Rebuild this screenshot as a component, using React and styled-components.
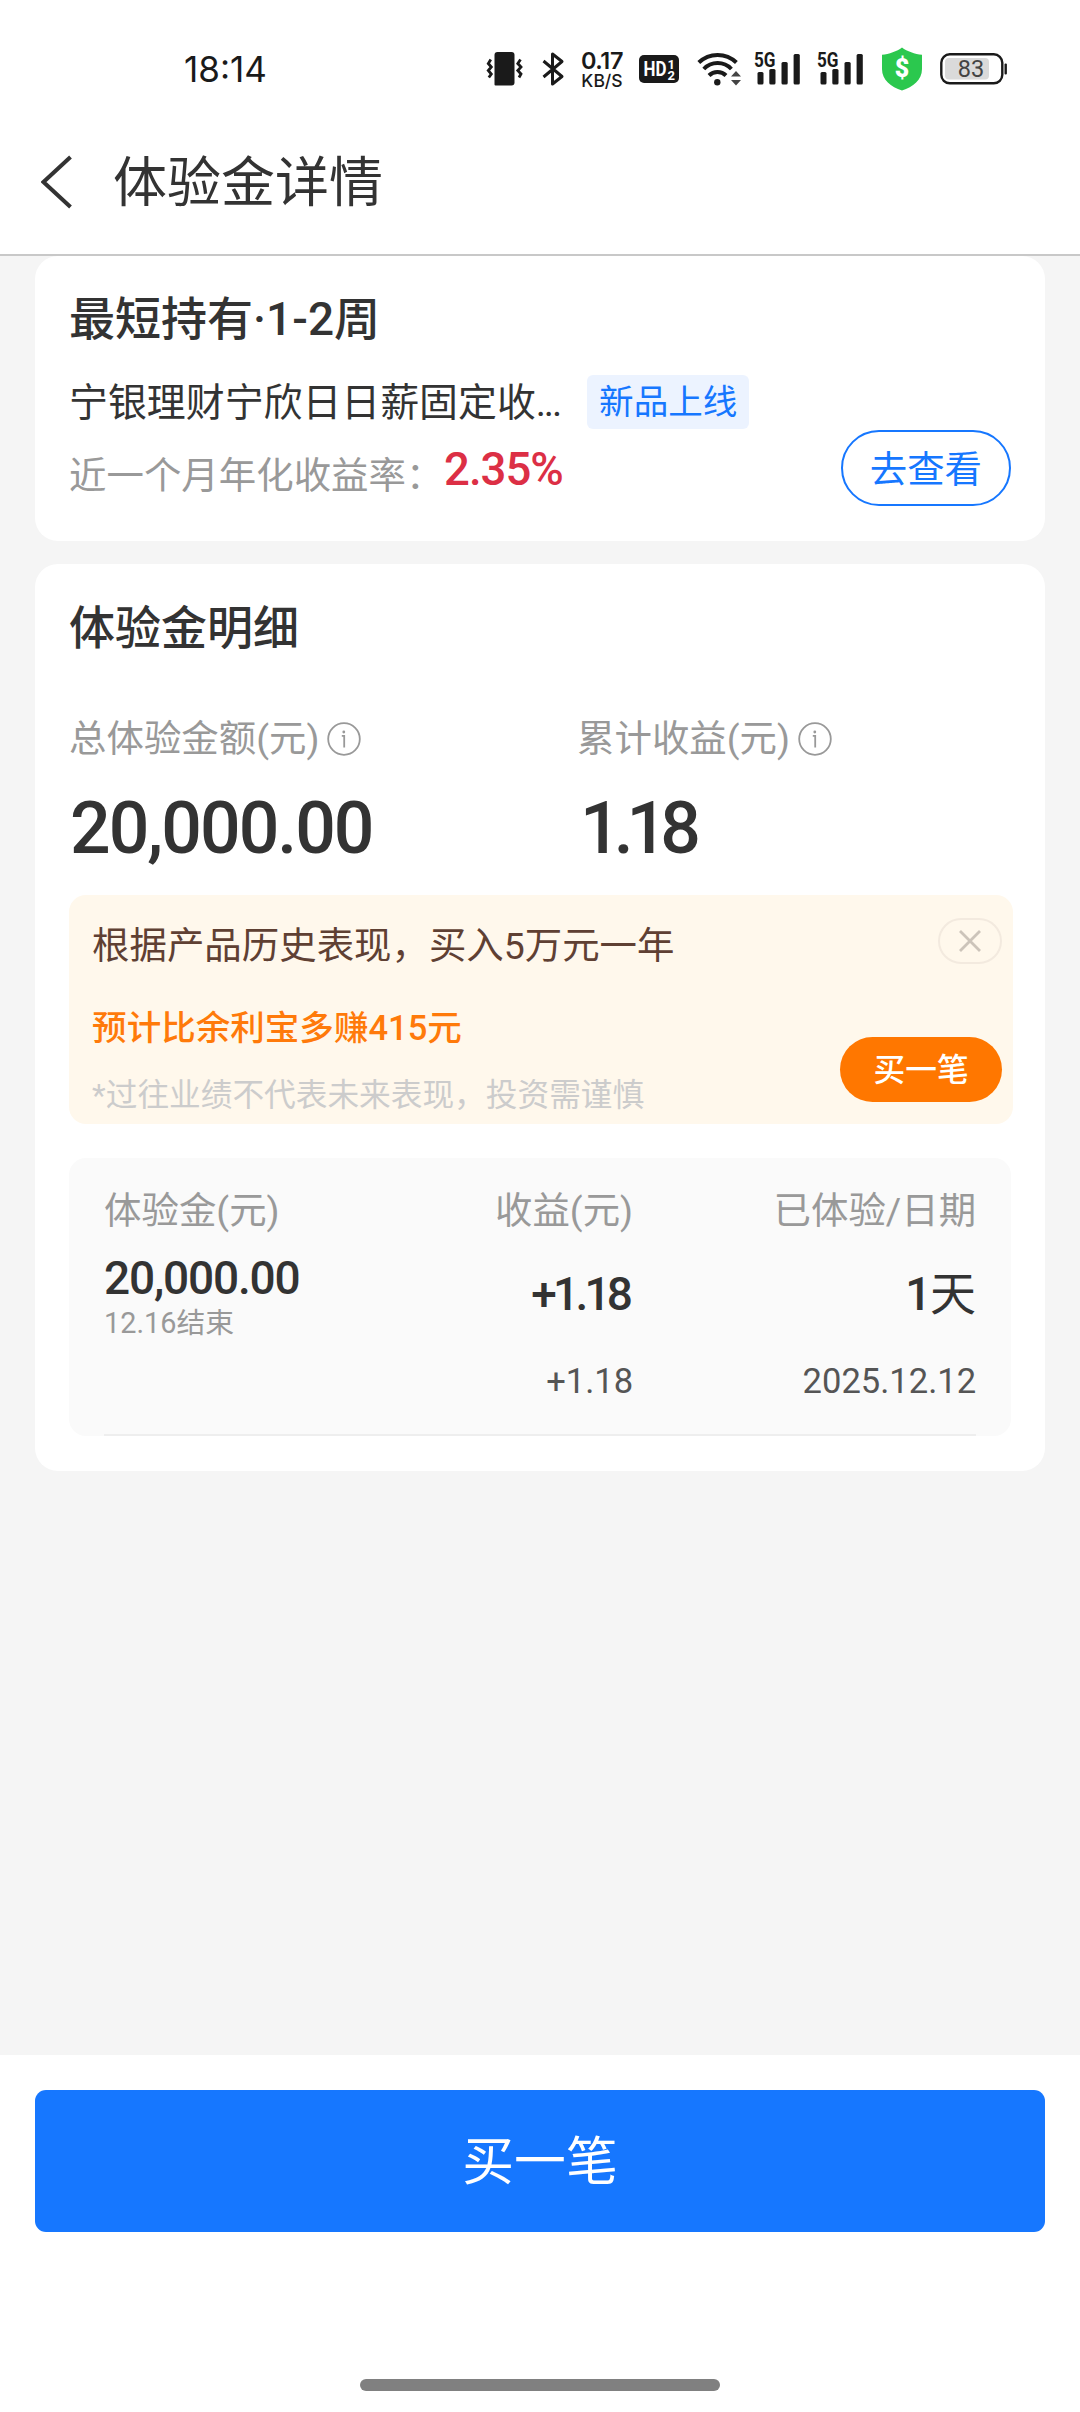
import React from "react";
import styled, { createGlobalStyle } from "styled-components";

const SignalIcon = () => (
	<svg width="48" height="44" viewBox="-1 -5 48 44" fill="#1a1a1a">
		<text x="0" y="15" fontSize="20" fontWeight="700" fontFamily="Roboto, sans-serif" textLength="21.5" lengthAdjust="spacingAndGlyphs">5G</text>
		<rect x="3.5" y="20" width="6" height="12.5" rx="1.5" />
		<rect x="15.3" y="17" width="6.2" height="15.5" rx="1.5" />
		<rect x="27.5" y="10" width="6.2" height="22.5" rx="1.5" />
		<rect x="39.6" y="2" width="6.2" height="30.5" rx="1.5" />
	</svg>
)

const InfoIcon = () => (
	<svg width="34" height="34" viewBox="0 0 34 34" fill="none" stroke="#999" strokeWidth="1.8">
		<circle cx="17" cy="17" r="15.8" />
		<path d="M14.8 13.9h2.4v11.500" />
		<circle cx="16.8" cy="10" r="1.4" fill="#999" stroke="none" />
	</svg>
)

const StatusIcons = () => (
	<>
		<StatusItem $left={220}>
			<svg width="38" height="36" viewBox="0 0 38 36">
				<path d="M8.500 4q0-3 3-3h14q3 0 3 3v27.500q0 3-3 3h-16q-1 0-1-1z" fill="#1a1a1a" />
				<path d="M4.800 8.500L2.300 12.500 5.300 16 2.300 19.500 5.300 23 2.800 26.500" fill="none" stroke="#1a1a1a" strokeWidth="2.800" />
				<path d="M34.500 8.500L31.800 12.500 35 16 31.800 19.500 35 23 33 26.500" fill="none" stroke="#1a1a1a" strokeWidth="2.800" />
			</svg>
		</StatusItem>
		<StatusItem $left={17.5}>
			<svg width="23" height="36" viewBox="0 0 23 36" fill="none" stroke="#1a1a1a" strokeWidth="3" strokeLinejoin="round">
				<path d="M1.500 10L20 25.500 10.500 33V3L20 10.500 1.500 26" />
			</svg>
		</StatusItem>
		<StatusItem $left={16}>
			<NetSpeed>
				<b>0.17</b>
				<span>KB/S</span>
			</NetSpeed>
		</StatusItem>
		<StatusItem $left={15}>
			<svg width="40" height="30" viewBox="0 0 40 30" fontFamily="Roboto, sans-serif" fontWeight="700" fill="#fff">
				<rect y="1" width="40" height="28" rx="5" fill="#1a1a1a" />
				<text x="4.500" y="22" fontSize="20.500" textLength="23" lengthAdjust="spacingAndGlyphs">HD</text>
				<text x="28.500" y="14.500" fontSize="13">1</text>
				<text x="28.500" y="25.500" fontSize="13">2</text>
			</svg>
		</StatusItem>
		<StatusItem $left={18}>
			<svg width="45" height="36" viewBox="0 0 45 36" fill="none" stroke="#1a1a1a" strokeWidth="4">
				<path d="M1.800 11.500A27 27 0 0 1 39.400 11.500" />
				<path d="M6.800 18A19 19 0 0 1 34.400 18" />
				<path d="M12 24.500A12 12 0 0 1 29 24.500" />
				<circle cx="20.300" cy="31.200" r="3.200" fill="#1a1a1a" stroke="none" />
				<path d="M34 25.500l5-5.500 5 5.500zM34 29l5 5.500 5-5.500z" fill="#444" stroke="none" />
			</svg>
		</StatusItem>
		<StatusItem $left={11.5}><SignalIcon /></StatusItem>
		<StatusItem $left={15}><SignalIcon /></StatusItem>
		<StatusItem $left={17.5}>
			<svg width="40" height="44" viewBox="0 0 40 44">
				<path d="M20 0.500C25 4.500 33 7 40 7.800V22C40 33 31 40 20 43.500 9 40 0 33 0 22V7.800C7 7 15 4.500 20 0.500z" fill="#2bc84e" />
				<text x="20" y="30" textAnchor="middle" fontSize="25" fontWeight="900" fontFamily="Roboto, sans-serif" fill="#fff">$</text>
			</svg>
		</StatusItem>
		<StatusItem $left={18}>
			<svg width="67" height="32" viewBox="0 0 67 32">
				<rect x="1.300" y="1.300" width="61" height="29" rx="8.500" fill="none" stroke="#1a1a1a" strokeWidth="2.400" />
				<rect x="5" y="5" width="44" height="21.500" rx="4" fill="#dadada" />
				<text x="31" y="24" textAnchor="middle" fontSize="23.500" fontFamily="Roboto, sans-serif" fill="#444">83</text>
				<rect x="64.500" y="10.500" width="2.400" height="11" rx="1" fill="#1a1a1a" />
			</svg>
		</StatusItem>
	</>
)

const App = () => {

	return (
		<>
			<GlobalStyle />
			<Page>
				<StatusBar>
					<Clock>18:14</Clock>
					<StatusIcons />
				</StatusBar>
				<NavBar>
					<svg width="32" height="54" viewBox="0 0 32 54" fill="none" stroke="#333" strokeWidth="4">
						<path d="M29.500 2L2.500 27 29.500 52" />
					</svg>
					<NavTitle>体验金详情</NavTitle>
				</NavBar>

				<Content>
					<ProductCard>
						<CardTitle>最短持有·1-2周</CardTitle>
						<ProductRow>
							<ProductName>宁银理财宁欣日日薪固定收<Dots>...</Dots></ProductName>
							<Tag>新品上线</Tag>
						</ProductRow>
						<RateRow>
							<RateLabel>近一个月年化收益率：</RateLabel>
							<Rate>2.35%</Rate>
							<ViewButton>去查看</ViewButton>
						</RateRow>
					</ProductCard>

					<DetailCard>
						<CardTitle>体验金明细</CardTitle>
						<Stats>
							<div>
								<StatLabel>总体验金额(元)<InfoIcon /></StatLabel>
								<StatValue>20,000.00</StatValue>
							</div>
							<div>
								<StatLabel>累计收益(元)<InfoIcon /></StatLabel>
								<StatValue $tight>1.18</StatValue>
							</div>
						</Stats>

						<Banner>
							<BannerText>
								<BannerLead>根据产品历史表现，买入5万元一年</BannerLead>
								<BannerGain>预计比余利宝多赚415元</BannerGain>
								<BannerNote>*过往业绩不代表未来表现，投资需谨慎</BannerNote>
							</BannerText>
							<BannerActions>
								<CloseButton>
									<svg width="24" height="24" viewBox="0 0 24 24" stroke="#ccc4ba" strokeWidth="2.8">
										<path d="M2 2L22 22M22 2L2 22" />
									</svg>
								</CloseButton>
								<BuySmall>买一笔</BuySmall>
							</BannerActions>
						</Banner>

						<Table>
							<HeadRow>
								<span>体验金(元)</span>
								<span>收益(元)</span>
								<span>已体验/日期</span>
							</HeadRow>
							<TotalRow>
								<Amount>
									<Num>20,000.00</Num>
									<small>12.16结束</small>
								</Amount>
								<Num $tight>+1.18</Num>
								<Days><Num>1</Num>天</Days>
							</TotalRow>
							<DayRow>
								<span />
								<span>+1.18</span>
								<span>2025.12.12</span>
							</DayRow>
							<TableLine />
						</Table>
					</DetailCard>
				</Content>

				<Footer>
					<BuyButton>买一笔</BuyButton>
					<HomeBar />
				</Footer>
			</Page>
		</>
	)
}

const GlobalStyle = createGlobalStyle`
	* { box-sizing: border-box; }
	body {
		margin: 0;
		background: #fff;
	}
	svg { display: block; flex: none; }
	button {
		font-family: inherit;
		padding: 0;
		border: none;
	}
`;

const Page = styled.div`
	width: 1080px;
	height: 2412px;
	display: flex;
	flex-direction: column;
	overflow: hidden;
	background: #fff;
	color: #333;
	font-family: Roboto, "Noto Sans CJK SC", sans-serif;
	white-space: nowrap;
`;

const StatusBar = styled.div`
	height: 112px;
	padding: 26px 0 0 184px;
	display: flex;
	align-items: flex-start;
	color: #1a1a1a;
`;

const Clock = styled.div`
	width: 82px;
	font-family: Inter, sans-serif;
	font-size: 35px;
	line-height: 86px;
`;

const StatusItem = styled.div`
	height: 86px;
	margin-left: ${p => p.$left}px;
	display: flex;
	align-items: center;
`;

const NetSpeed = styled.div`
	width: 43px;
	display: flex;
	flex-direction: column;
	align-items: center;
	padding-top: 2px;
	font-family: Inter, sans-serif;
	b {
		font-size: 23.5px;
		line-height: 20px;
		font-weight: 600;
		letter-spacing: -0.4px;
	}
	span {
		font-size: 17.5px;
		line-height: 19px;
		font-weight: 500;
	}
`;

const NavBar = styled.div`
	height: 144px;
	padding: 0 0 2px 41px;
	display: flex;
	align-items: center;
	border-bottom: 2px solid #c8c8c8;
`;

const NavTitle = styled.h1`
	margin: 3px 0 0 40px;
	font-size: 54px;
	font-weight: 400;
	line-height: 80px;
`;

const Content = styled.main`
	height: 1799px;
	padding: 0 34.56px;
	background: #f5f5f5;
`;

const Card = styled.section`
	padding: 0 34.56px;
	background: #fff;
	border-radius: 23px;
`;

const ProductCard = styled(Card)`
	height: 285px;
	padding-top: 32px;
`;

const DetailCard = styled(Card)`
	margin-top: 23px;
	height: 907px;
	padding-top: 33px;
`;

const CardTitle = styled.h2`
	margin: 0;
	font-size: 46px;
	font-weight: 500;
	line-height: 62px;
`;

const ProductRow = styled.div`
	margin-top: 25px;
	height: 54px;
	display: flex;
`;

const ProductName = styled.div`
	width: 518px;
	font-size: 38.9px;
	line-height: 56px;
`;

const Dots = styled.span`
	letter-spacing: -2.2px;
`;

const Tag = styled.div`
	height: 54px;
	padding: 0 12px;
	border-radius: 6px;
	background: #ecf3ff;
	color: #1677ff;
	font-size: 34.56px;
	line-height: 54px;
`;

const RateRow = styled.div`
	margin-top: 1px;
	height: 76px;
	display: flex;
`;

const RateLabel = styled.div`
	width: 375px;
	padding-top: 16px;
	font-size: 37.44px;
	line-height: 60px;
	color: #999;
`;

const Rate = styled.div`
	flex: 1;
	font-size: 45.5px;
	font-weight: 500;
	line-height: 79px;
	letter-spacing: -1px;
	color: #dc2f45;
`;

const ViewButton = styled.button`
	width: 170px;
	height: 76px;
	padding-bottom: 3px;
	border: 2px solid #1677ff;
	border-radius: 38px;
	background: #fff;
	color: #1677ff;
	font-size: 37.44px;
`;

const Stats = styled.div`
	margin-top: 57px;
	display: grid;
	grid-template-columns: 508px 1fr;
`;

const StatLabel = styled.div`
	height: 44px;
	display: flex;
	align-items: center;
	gap: 8px;
	padding-top: 1px;
	font-size: 37.44px;
	line-height: 48px;
	color: #999;
`;

const StatValue = styled.div`
	margin-top: 29px;
	padding-left: ${p => p.$tight ? 3 : 1}px;
	font-size: 71.5px;
	font-weight: 500;
	line-height: 80px;
	letter-spacing: ${p => p.$tight ? "-7px" : "-2px"};
`;

const Banner = styled.div`
	width: 944px;
	height: 229px;
	margin-top: 26px;
	padding: 23px 11px 0 23px;
	display: flex;
	justify-content: space-between;
	border-radius: 17px;
	background: #fff8ec;
`;

const BannerText = styled.div`
	padding-top: 3px;
	line-height: 51px;
`;

const BannerLead = styled.div`
	font-size: 37.44px;
	color: #5f4033;
`;

const BannerGain = styled.div`
	margin-top: 31px;
	font-size: 34.56px;
	font-weight: 500;
	color: #ff7a0a;
`;

const BannerNote = styled.div`
	margin-top: 16px;
	font-size: 31.68px;
	color: #ccc;
`;

const BannerActions = styled.div`
	display: flex;
	flex-direction: column;
	align-items: flex-end;
	gap: 73px;
`;

const CloseButton = styled.button`
	width: 64px;
	height: 46px;
	display: flex;
	align-items: center;
	justify-content: center;
	border: 2px solid #f3eadf;
	border-radius: 23px;
	background: none;
`;

const BuySmall = styled.button`
	width: 162px;
	height: 65px;
	padding-bottom: 5px;
	border-radius: 33px;
	background: #ff7700;
	color: #fff;
	font-size: 31.68px;
	font-weight: 500;
`;

const Table = styled.div`
	width: 942px;
	height: 278px;
	margin-top: 34px;
	padding: 26px 35px 0;
	display: flex;
	flex-direction: column;
	border-radius: 17px;
	background: #fafafa;
`;

const TableRow = styled.div`
	display: grid;
	grid-template-columns: 265px 264px 343px;
	> * + * {
		text-align: right;
	}
`;

const HeadRow = styled(TableRow)`
	font-size: 37.44px;
	line-height: 54px;
	color: #999;
`;

const TotalRow = styled(TableRow)`
	margin-top: 17px;
	line-height: 78px;
`;

const Num = styled.span`
	padding-right: ${p => p.$tight ? 4 : 0}px;
	font-size: 46px;
	font-weight: 500;
	letter-spacing: ${p => p.$tight ? "-3.8px" : "-1.2px"};
`;

const Amount = styled.div`
	display: flex;
	flex-direction: column;
	line-height: 46px;
	small {
		font-size: 28.8px;
		line-height: 44px;
		color: #999;
	}
`;

const Days = styled.div`
	font-size: 46px;
`;

const DayRow = styled(TableRow)`
	margin-top: 11px;
	font-size: 34.56px;
	line-height: 50px;
	color: #555;
`;

const TableLine = styled.div`
	margin-top: auto;
	height: 2px;
	background: #eee;
`;

const Footer = styled.footer`
	flex: 1;
	padding: 35px 35px 21px;
	display: flex;
	flex-direction: column;
	align-items: center;
	justify-content: space-between;
`;

const BuyButton = styled.button`
	width: 1010px;
	height: 142px;
	padding-bottom: 8px;
	border-radius: 11px;
	background: #1677ff;
	color: #fff;
	font-size: 51.84px;
`;

const HomeBar = styled.div`
	width: 360px;
	height: 12px;
	border-radius: 6px;
	background: #808080;
`;

export default App;
